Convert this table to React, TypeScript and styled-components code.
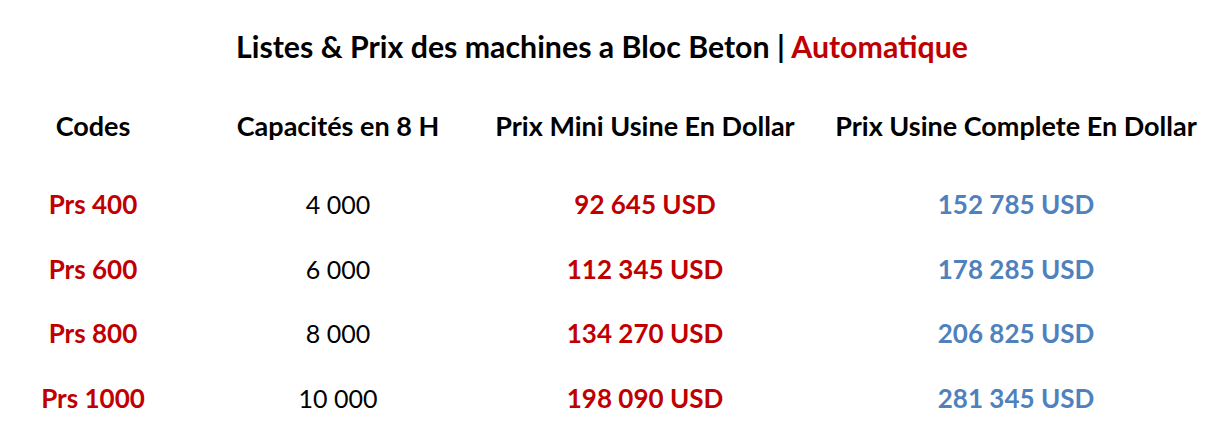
import styled, { createGlobalStyle } from 'styled-components'

const GlobalStyle = createGlobalStyle`
  html, body {
    margin: 0;
    padding: 0;
    background: #ffffff;
  }
  body {
    font-family: Lato, "Open Sans", "Liberation Sans", sans-serif;
    color: #000000;
  }
`;

const Page = styled.div`
  width: 1210px;
  height: 437px;
  padding-top: 28px;
  box-sizing: border-box;
`;

const Title = styled.h1`
  margin: 0;
  text-align: center;
  font-size: 30.3px;
  font-weight: 700;
  line-height: 36px;
  padding-right: 6px;
`;

const Accent = styled.span`
  color: #c00000;
`;

const Table = styled.div`
  display: grid;
  grid-template-columns: 186px 304px 310px 1fr;
  justify-items: center;
  align-items: center;
  margin-top: 44px;
`;

const HeadCell = styled.div`
  font-size: 27px;
  font-weight: 700;
  height: 36px;
  line-height: 36px;
  margin-bottom: 42px;
  white-space: nowrap;

  &:nth-child(4n) {
    padding-left: 22px;
  }
`;

const Cell = styled.div<{ $tone: 'code' | 'plain' | 'mini' | 'full' }>`
  font-size: ${(p) => (p.$tone === 'plain' ? '25px' : '26px')};
  height: 64.5px;
  line-height: 36px;
  white-space: nowrap;
  font-weight: ${(p) => (p.$tone === 'plain' ? 400 : 700)};
  color: ${(p) =>
    p.$tone === 'plain' ? '#000000' : p.$tone === 'full' ? '#4f81bd' : '#c00000'};

  &:nth-child(4n) {
    padding-left: 22px;
  }
`;

const rows = [
  { code: 'Prs 400', capacity: '4 000', mini: '92 645 USD', full: '152 785 USD' },
  { code: 'Prs 600', capacity: '6 000', mini: '112 345 USD', full: '178 285 USD' },
  { code: 'Prs 800', capacity: '8 000', mini: '134 270 USD', full: '206 825 USD' },
  { code: 'Prs 1000', capacity: '10 000', mini: '198 090 USD', full: '281 345 USD' },
];

export default function App(): JSX.Element {
  return (
    <Page>
      <GlobalStyle />
      <Title>
        Listes &amp; Prix des machines a Bloc Beton | <Accent>Automatique</Accent>
      </Title>

      <Table>
        <HeadCell>Codes</HeadCell>
        <HeadCell>Capacités en 8 H</HeadCell>
        <HeadCell>Prix Mini Usine En Dollar</HeadCell>
        <HeadCell>Prix Usine Complete En Dollar</HeadCell>

        {rows.map((row) => [
          <Cell key={row.code + 'c'} $tone='code'>{row.code}</Cell>,
          <Cell key={row.code + 'q'} $tone='plain'>{row.capacity}</Cell>,
          <Cell key={row.code + 'm'} $tone='mini'>{row.mini}</Cell>,
          <Cell key={row.code + 'f'} $tone='full'>{row.full}</Cell>,
        ])}
      </Table>
    </Page>
  )
}
